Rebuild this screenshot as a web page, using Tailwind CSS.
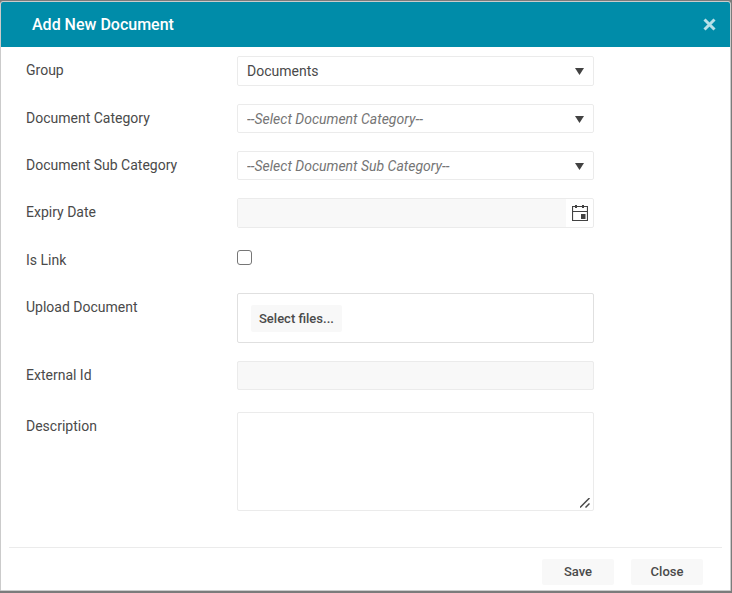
<!DOCTYPE html>
<html lang="en">
<head>
<meta charset="utf-8"/>
<meta content="width=device-width, initial-scale=1.0" name="viewport"/>
<title>Add New Document</title>
<script src="https://cdn.jsdelivr.net/npm/@tailwindcss/browser@4"></script>
</head>
<body class="bg-[#7b7b7b] min-h-screen flex flex-col pt-px pr-px pb-[2px] text-sm text-[#4a4a4a] font-[Roboto,sans-serif]">
<!-- Dialog -->
<div aria-labelledby="dialogTitle" class="grow flex flex-col bg-white border border-[#cbcbcb] rounded-t-[3px] overflow-hidden" role="dialog">
<header class="bg-[#008ca9] h-[45px] flex items-center justify-between pl-[31px] pr-[14px]">
<h1 class="text-base text-white font-medium" id="dialogTitle">Add New Document</h1>
<button aria-label="Close dialog" class="p-0" type="button">
<svg class="size-[13px]" fill="none" stroke="#b8e0e8" stroke-width="3" viewBox="0 0 13 13">
<path d="M1.500 1.500L11.500 11.500M11.500 1.500L1.500 11.500"></path>
</svg>
</button>
</header>
<form class="grow flex flex-col" id="documentForm" onsubmit="return false;">
<div class="grow grid grid-cols-[211fr_357fr_136fr] content-start items-start gap-y-[18px] pl-[25px] pt-[9px] leading-[29px]">
<label class="col-start-1" for="group">Group</label>
<div class="relative">
<select class="block appearance-none w-full h-[30px] border border-[#ebebeb] rounded-[2px] bg-white px-[9px]" id="group">
<option>Documents</option>
</select>
<svg class="absolute right-[10px] top-[12px] w-[9px] h-[7px] pointer-events-none" fill="#424242" viewBox="0 0 9 7"><path d="M0 0h9L4.500 7z"></path></svg>
</div>
<label class="col-start-1" for="category">Document Category</label>
<div class="relative">
<select class="block appearance-none w-full h-[29px] border border-[#ebebeb] rounded-[2px] bg-white px-[9px] italic text-[#757575]" id="category">
<option>--Select Document Category--</option>
</select>
<svg class="absolute right-[10px] top-[12px] w-[9px] h-[7px] pointer-events-none" fill="#424242" viewBox="0 0 9 7"><path d="M0 0h9L4.500 7z"></path></svg>
</div>
<label class="col-start-1" for="subCategory">Document Sub Category</label>
<div class="relative">
<select class="block appearance-none w-full h-[29px] border border-[#ebebeb] rounded-[2px] bg-white px-[9px] italic text-[#757575]" id="subCategory">
<option>--Select Document Sub Category--</option>
</select>
<svg class="absolute right-[10px] top-[12px] w-[9px] h-[7px] pointer-events-none" fill="#424242" viewBox="0 0 9 7"><path d="M0 0h9L4.500 7z"></path></svg>
</div>
<label class="col-start-1" for="expiry">Expiry Date</label>
<div class="flex h-[30px] border border-[#ebebeb] rounded-[2px]">
<input class="grow min-w-0 bg-[#f8f8f8] px-[9px]" id="expiry" type="text"/>
<button aria-label="Open calendar" class="w-[27px] flex items-center justify-center" type="button">
<svg class="w-[16px] h-[18px]" fill="none" stroke="#424242" viewBox="0 0 16 18">
<path d="M.5 2.500h15v14H.5zM.5 7.500h15" stroke-width="1.200"></path>
<path d="M4 1v3M11 1v3" stroke-width="2"></path>
<path d="M9 10h4.500v5H9z" fill="#424242" stroke="none"></path>
</svg>
</button>
</div>
<label class="col-start-1" for="isLink">Is Link</label>
<div class="h-[29px] pt-1">
<input class="block appearance-none size-[15px] border border-[#767676] rounded-[3px] bg-white checked:bg-[#008ca9]" id="isLink" type="checkbox"/>
</div>
<label class="col-start-1" for="selectFiles">Upload Document</label>
<div class="border border-[#e0e0e0] rounded-[2px] h-[50px] px-[13px] py-[11px]">
<button class="block bg-[#f8f8f8] rounded-[2px] h-[27px] px-2 text-[13px] leading-[27px] font-medium" id="selectFiles" type="button">Select files...</button>
</div>
<label class="col-start-1" for="externalId">External Id</label>
<input class="block w-full h-[29px] border border-[#ebebeb] rounded-[2px] bg-[#f8f8f8] px-[9px]" id="externalId" type="text"/>
<label class="col-start-1 mt-1" for="description">Description</label>
<div class="relative mt-1">
<textarea class="block resize-none w-full h-[99px] border border-[#ebebeb] rounded-[2px] px-[9px] leading-5" id="description"></textarea>
<svg class="absolute right-[4px] bottom-[3px] size-[10px] pointer-events-none" fill="none" stroke="#4a4a4a" stroke-width="1.500" viewBox="0 0 10 10">
<path d="M0 9.500L9.500 0M5.500 9.500L9.500 5.500"></path>
</svg>
</div>
</div>
<!-- Actions -->
<footer class="mx-2 border-t border-[#ebebeb] flex justify-end gap-[17px] pt-[11px] pr-[19px] pb-[5px] text-[13px] font-medium">
<button class="bg-[#f8f8f8] rounded-[2px] w-[72px] h-[26px]" type="submit">Save</button>
<button class="bg-[#f8f8f8] rounded-[2px] w-[72px] h-[26px]" type="button">Close</button>
</footer>
</form>
</div>
</body>
</html>
